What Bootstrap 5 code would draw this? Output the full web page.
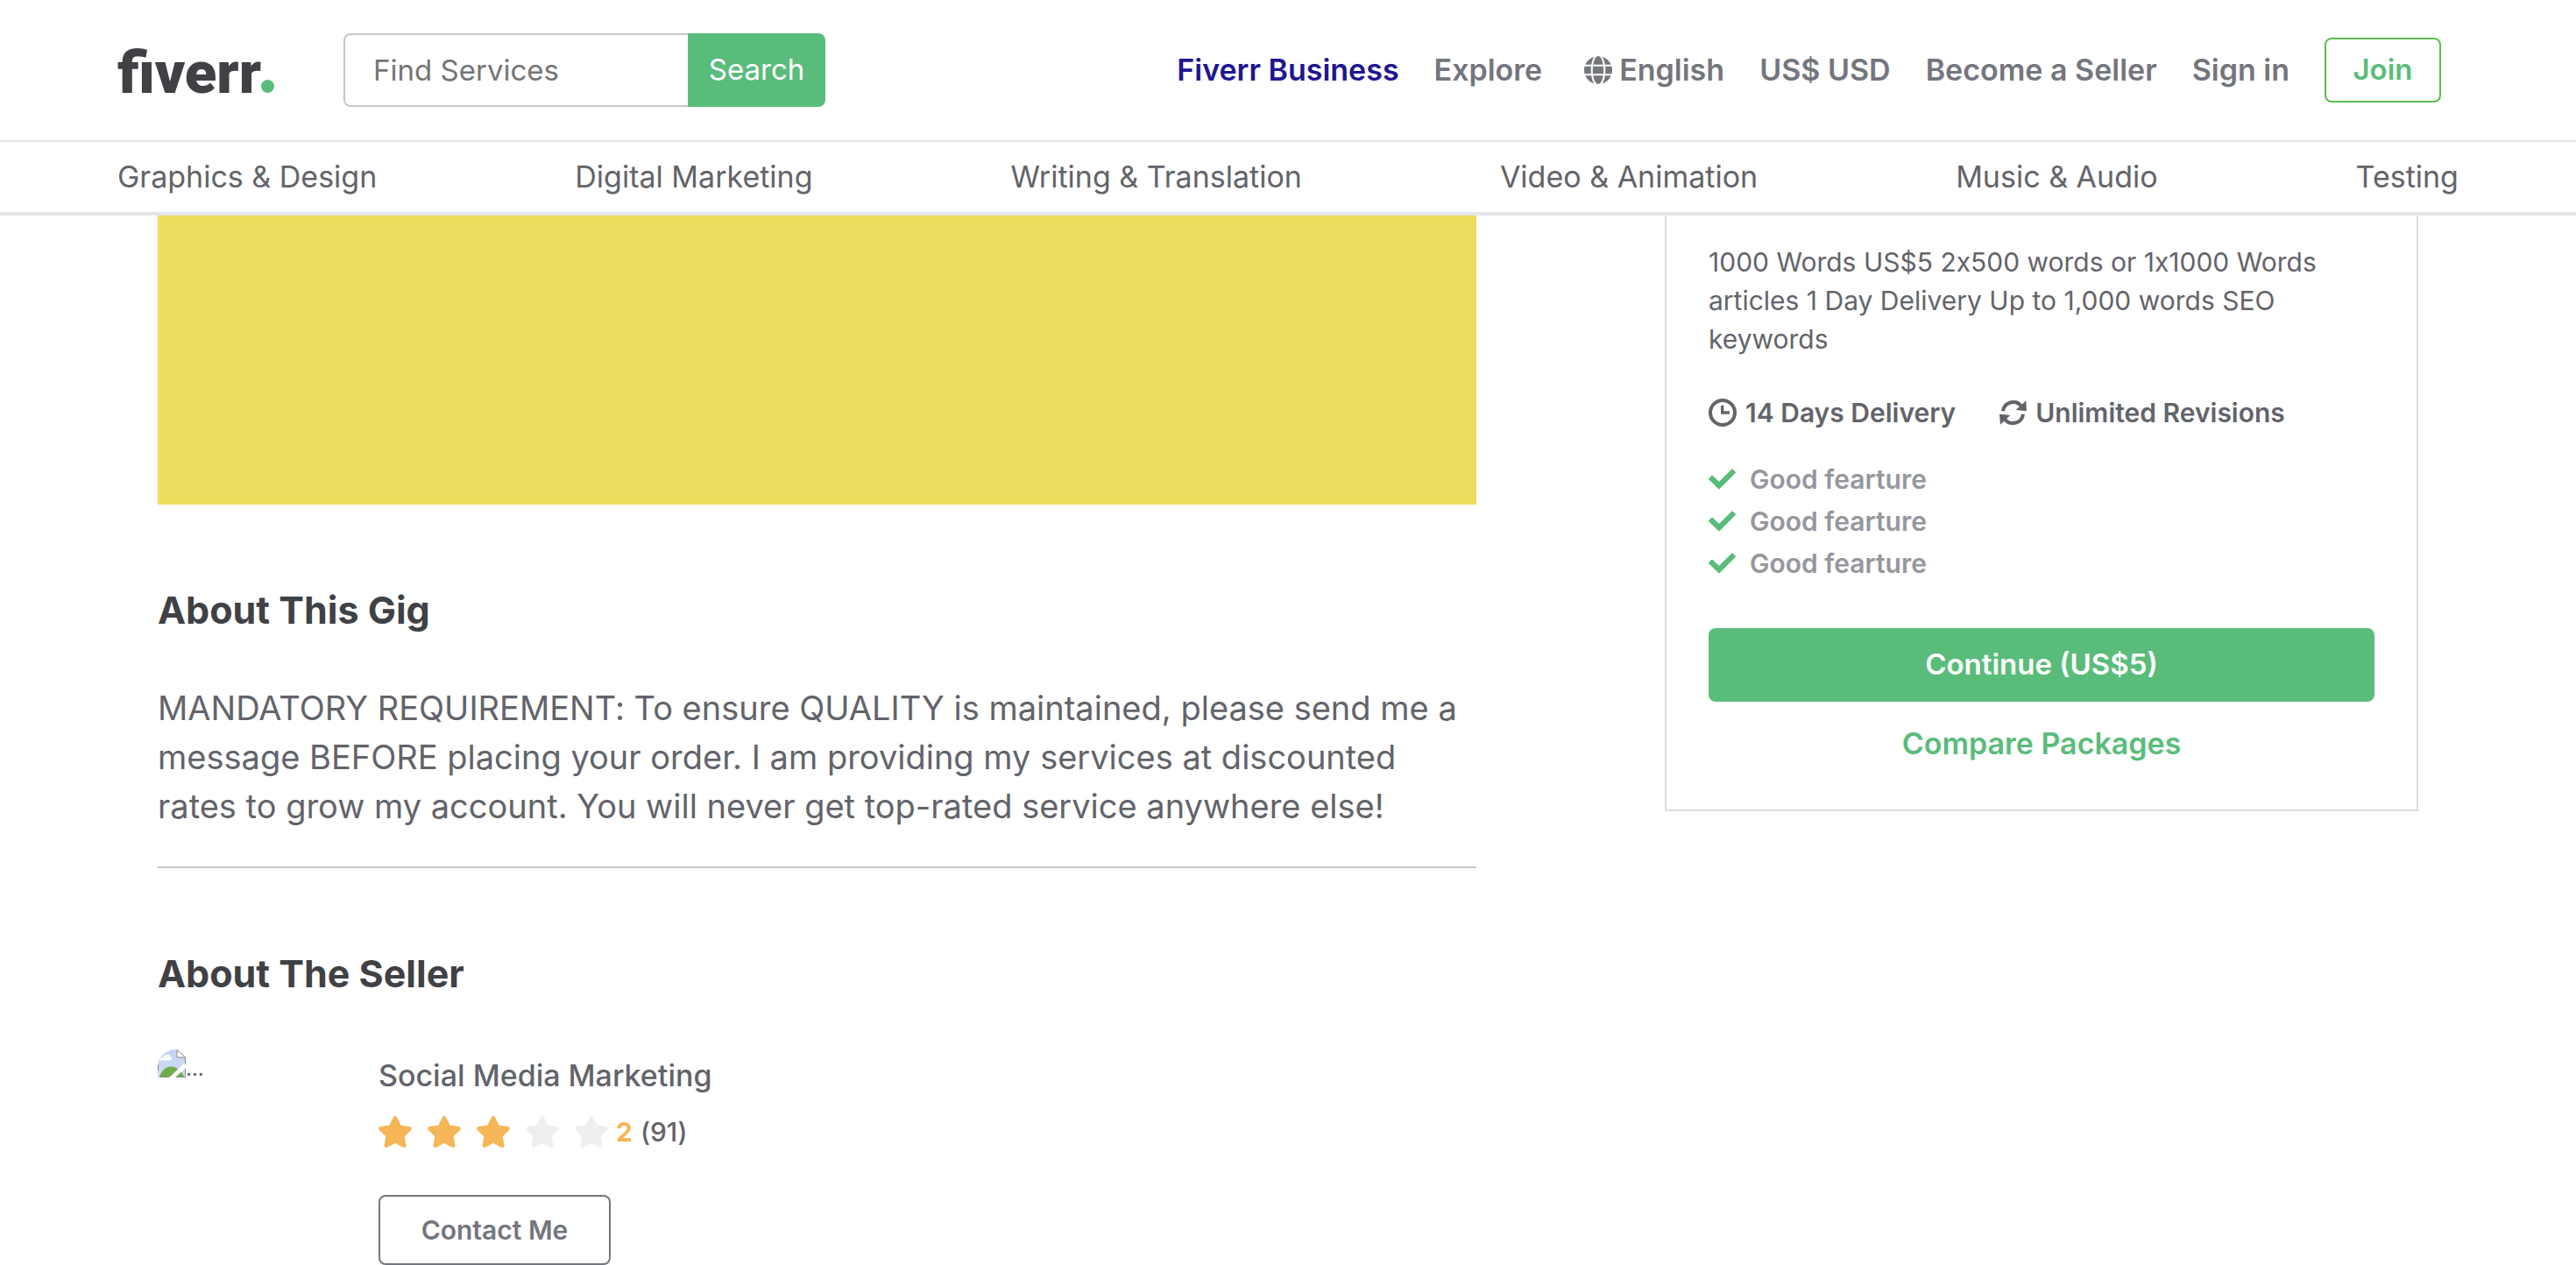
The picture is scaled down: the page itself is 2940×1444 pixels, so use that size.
<!DOCTYPE html>
<html lang="en">
<head>
<meta charset="utf-8">
<meta name="viewport" content="width=device-width, initial-scale=1">
<title>Gig details</title>
<link href="https://cdn.jsdelivr.net/npm/bootstrap@5.3.0/dist/css/bootstrap.min.css" rel="stylesheet">
<style>
  :root { --green: #5abc7b; --ink: #404145; --text: #62646a; --muted: #74767e; --soft: #95979d; --line: #e4e5e7; }
  body { font-family: Inter, "Open Sans", sans-serif; font-size: 30px; line-height: 44px; font-variant-ligatures: no-contextual; color: var(--text); background: #fff; }
  a { text-decoration: none; color: inherit; }
  .site-header { background: #fff; border-bottom: 4px solid var(--line); }
  .top-bar { min-height: 160px; padding: 0 154px 0 134px; }
  .brand-logo { font-family: Roboto, sans-serif; font-weight: 900; font-size: 67px; line-height: 68px; color: var(--ink); padding-top: 6px; }
  .brand-dot { width: 15px; height: 15px; background: var(--green); }
  .search-form { width: 550px; margin-left: 79px; }
  .search-form .form-control { height: 84px; padding: 0 32px; font-size: 33px; color: var(--text); border: 2px solid #c5c6c9; border-right: 0; border-radius: 8px 0 0 8px; }
  .search-form .form-control::placeholder { color: #757575; }
  .search-form .btn { width: 157px; height: 84px; padding: 0; font-size: 33px; border-radius: 0 8px 8px 0; }
  .btn-green, .btn-green:hover { background: var(--green); color: #fff; border: 0; }
  .main-links { font-size: 34px; line-height: 48px; font-weight: 600; color: var(--muted); gap: 40px; }
  .business-link { color: #1e1692; }
  .btn-join { width: 133px; height: 74px; padding: 0; font-size: 33px; font-weight: 600; color: var(--green); border: 2px solid #5bbd4e; border-radius: 8px; }
  .category-bar { min-height: 82px; padding: 0 134px; font-size: 34px; line-height: 48px; border-top: 2px solid var(--line); }
  .page-body { padding: 0 180px; }
  .gig-cover { height: 330px; background: #ecdd5e; }
  .section-title { margin: 90px 0 0; font-size: 43px; line-height: 60px; font-weight: 700; color: var(--ink); }
  .gig-text { margin: 54px 0 0; font-size: 38px; line-height: 56px; }
  .section-rule { margin: 41px 0 0; border-top: 2px solid #c5c6c9; opacity: 1; }
  .seller-row { margin-top: 57px; }
  .avatar { width: 252px; font-size: 24px; line-height: 36px; }
  .seller-name { margin-top: 6px; font-size: 34px; line-height: 48px; font-weight: 500; }
  .rating-row { margin-top: 18px; gap: 9px; font-weight: 500; }
  .stars { gap: 18px; }
  .star-on, .score { color: #f6b557; }
  .star-off { color: #efefef; }
  .btn-contact { margin-top: 50px; width: 265px; height: 80px; padding: 0; font-size: 30px; font-weight: 600; color: var(--muted); border: 2px solid var(--muted); border-radius: 8px; }
  .package-card { padding: 31px 48px 51px; border: 2px solid #dadbdd; border-top: 0; }
  .package-facts { margin-top: 40px; gap: 50px; font-weight: 600; }
  .package-facts > div { gap: 10px; }
  .feature-list { margin: 30px 0 0; line-height: 48px; font-weight: 600; color: var(--soft); }
  .feature-list li { gap: 16px; }
  .btn-continue { margin-top: 50px; height: 84px; padding: 0; font-size: 33px; font-weight: 600; border-radius: 8px; }
  .compare-link { margin-top: 24px; font-size: 34px; line-height: 48px; font-weight: 600; color: var(--green); }
</style>
</head>
<body>
<svg class="d-none" aria-hidden="true">
  <symbol id="star" viewBox="18 0 540 512"><path fill="currentColor" d="M259.3 17.8L194 150.2 47.9 171.5c-26.2 3.8-36.7 36.1-17.7 54.6l105.7 103-25 145.5c-4.5 26.3 23.2 46 46.4 33.7L288 439.6l130.7 68.7c23.2 12.2 50.9-7.4 46.4-33.7l-25-145.5 105.7-103c19-18.5 8.5-50.8-17.7-54.6L382 150.2 316.7 17.8c-11.7-23.6-45.6-23.9-57.4 0z"/></symbol>
  <symbol id="check" viewBox="0 0 93 70"><path fill="#5abc7b" stroke="#5abc7b" stroke-width="4" stroke-linejoin="round" d="M2 34L12 24 36 46 81 2 91 12 36 67Z"/></symbol>
</svg>

<header class="site-header sticky-top">
  <div class="top-bar d-flex align-items-center">
    <a class="brand-logo d-flex align-items-baseline" href="#" aria-label="fiverr home">fiverr<span class="brand-dot d-inline-block rounded-circle"></span></a>
    <form class="search-form input-group flex-nowrap" role="search">
      <input class="form-control" type="search" placeholder="Find Services" aria-label="Find Services">
      <button class="btn btn-green" type="button">Search</button>
    </form>
    <nav class="main-links d-flex align-items-center ms-auto text-nowrap" aria-label="Main">
      <a class="business-link" href="#">Fiverr Business</a>
      <a href="#">Explore</a>
      <a class="d-flex align-items-center gap-2 ps-2" href="#">
        <svg width="32" height="32" viewBox="0 8 496 496" aria-hidden="true"><path fill="currentColor" d="M336.5 160C322 70.7 287.8 8 248 8s-74 62.7-88.5 152h177zM152 256c0 22.2 1.2 43.5 3.3 64h185.3c2.1-20.5 3.3-41.8 3.3-64s-1.2-43.5-3.3-64H155.3c-2.1 20.5-3.3 41.8-3.3 64zm324.7-96c-28.6-67.9-86.5-120.4-158-141.6 24.4 33.8 41.2 84.7 50 141.6h108zM177.2 18.4C105.8 39.6 47.8 92.1 19.3 160h108c8.7-56.9 25.5-107.8 49.9-141.6zM487.4 192H372.7c2.1 21 3.3 42.5 3.3 64s-1.2 43-3.3 64h114.6c5.5-20.5 8.6-41.8 8.6-64s-3.1-43.5-8.5-64zM120 256c0-21.5 1.2-43 3.3-64H8.6C3.2 212.5 0 233.8 0 256s3.2 43.5 8.6 64h114.6c-2-21-3.2-42.5-3.2-64zm39.5 96c14.5 89.3 48.7 152 88.5 152s74-62.7 88.5-152h-177zm159.3 141.6c71.4-21.2 129.4-73.7 158-141.6h-108c-8.8 56.9-25.6 107.8-50 141.6zM19.3 352c28.6 67.9 86.5 120.4 158 141.6-24.4-33.8-41.2-84.7-50-141.6h-108z"/></svg>
        English
      </a>
      <a href="#">US$ USD</a>
      <a href="#">Become a Seller</a>
      <a href="#">Sign in</a>
      <button class="btn btn-join" type="button">Join</button>
    </nav>
  </div>
  <nav class="category-bar d-flex align-items-center justify-content-between" aria-label="Categories">
    <a href="#">Graphics &amp; Design</a>
    <a href="#">Digital Marketing</a>
    <a href="#">Writing &amp; Translation</a>
    <a href="#">Video &amp; Animation</a>
    <a href="#">Music &amp; Audio</a>
    <a href="#">Testing</a>
  </nav>
</header>

<main class="page-body">
  <div class="row g-0 align-items-start">
    <div class="col-7">
      <div class="gig-cover"></div>
      <section>
        <h2 class="section-title">About This Gig</h2>
        <p class="gig-text">MANDATORY REQUIREMENT: To ensure QUALITY is maintained, please send me a message BEFORE placing your order. I am providing my services at discounted rates to grow my account. You will never get top-rated service anywhere else!</p>
        <hr class="section-rule">
      </section>
      <section>
        <h2 class="section-title">About The Seller</h2>
        <div class="seller-row d-flex">
          <div class="avatar d-flex align-items-start flex-shrink-0">
            <svg width="32" height="32" viewBox="0 0 32 32" aria-hidden="true">
              <defs>
                <clipPath id="round"><path d="M0 32V19A21 19 0 0 1 21 0H32V32Z"/></clipPath>
                <linearGradient id="sky" x1="0" y1="0" x2="0" y2="1"><stop offset="0" stop-color="#c3d3f1"/><stop offset="1" stop-color="#cfdcf6"/></linearGradient>
              </defs>
              <g clip-path="url(#round)">
                <path fill="url(#sky)" d="M0 0H22L32 9V32H0Z"/>
                <path fill="#fff" d="M2 12.500C2 10 5 9 6.500 9 7 5 14 4 14.500 8.500 17 9 16.500 12.500 14 12.500Z"/>
                <path fill="#6fac4b" d="M2 31C5 23 10 19.500 15 19.500 22 20 27 24 30 31Z"/>
                <path fill="#fff" d="M13 32L32 14V21L20 32Z"/>
                <path fill="#fff" stroke="#8c8c8c" d="M22 .5V9H31.500Z"/>
                <path fill="none" stroke="#8c8c8c" d="M31.500 9V17M31.500 22V31.500H21M13 31.500H2M.5 24V17"/>
              </g>
            </svg><span class="pt-1">...</span>
          </div>
          <div>
            <div class="seller-name">Social Media Marketing</div>
            <div class="rating-row d-flex align-items-center">
              <div class="stars d-flex" role="img" aria-label="3 of 5 stars">
                <svg class="star-on" width="38" height="36"><use href="#star"/></svg>
                <svg class="star-on" width="38" height="36"><use href="#star"/></svg>
                <svg class="star-on" width="38" height="36"><use href="#star"/></svg>
                <svg class="star-off" width="38" height="36"><use href="#star"/></svg>
                <svg class="star-off" width="38" height="36"><use href="#star"/></svg>
              </div>
              <span class="score fw-bold">2</span>
              <span>(91)</span>
            </div>
            <button class="btn btn-contact" type="button">Contact Me</button>
          </div>
        </div>
      </section>
    </div>

    <aside class="col-4 offset-1 package-card">
      <p class="m-0">1000 Words US$5 2x500 words or 1x1000 Words articles 1 Day Delivery Up to 1,000 words SEO keywords</p>
      <div class="package-facts d-flex text-nowrap">
        <div class="d-flex align-items-center">
          <svg width="32" height="32" viewBox="0 0 96 96" fill="none" stroke="currentColor" aria-hidden="true"><circle cx="48" cy="48" r="42" stroke-width="12"/><path stroke-width="10" d="M47 23V48H72"/></svg>
          <span>14 Days Delivery</span>
        </div>
        <div class="d-flex align-items-center">
          <svg width="31" height="28" viewBox="0 0 93 84" aria-hidden="true"><path fill="none" stroke="currentColor" stroke-width="12" d="M12 37A35 35 0 0 1 74 19M81 47A35 35 0 0 1 19 65"/><path fill="currentColor" d="M91 1L93 37 56 33ZM0 47L37 51 3 83Z"/></svg>
          <span>Unlimited Revisions</span>
        </div>
      </div>
      <ul class="feature-list list-unstyled">
        <li class="d-flex align-items-center"><svg width="31" height="24" aria-hidden="true"><use href="#check"/></svg>Good fearture</li>
        <li class="d-flex align-items-center"><svg width="31" height="24" aria-hidden="true"><use href="#check"/></svg>Good fearture</li>
        <li class="d-flex align-items-center"><svg width="31" height="24" aria-hidden="true"><use href="#check"/></svg>Good fearture</li>
      </ul>
      <button class="btn btn-green btn-continue w-100" type="button">Continue (US$5)</button>
      <a class="compare-link d-block text-center" href="#">Compare Packages</a>
    </aside>
  </div>
</main>
<script src="https://cdn.jsdelivr.net/npm/bootstrap@5.3.0/dist/js/bootstrap.bundle.min.js"></script>
</body>
</html>
